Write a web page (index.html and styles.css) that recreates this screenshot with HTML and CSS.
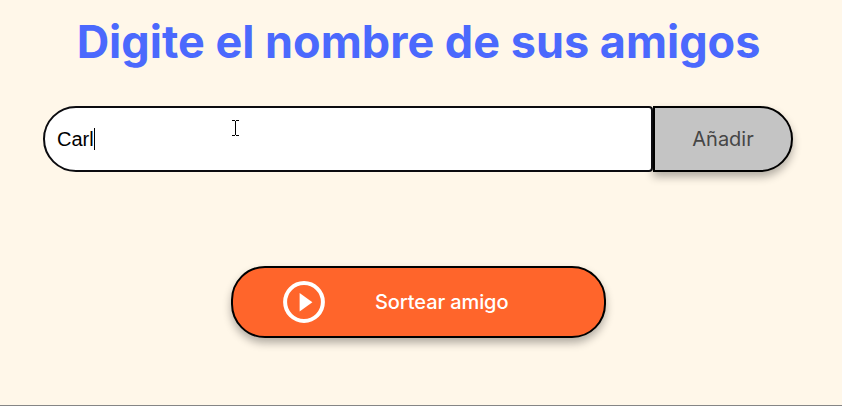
FILE: index.html
```
<!DOCTYPE html>
<html lang="es">
<head>
<meta charset="utf-8">
<title>Amigo secreto</title>
<link rel="stylesheet" href="styles.css">
</head>
<body>
<main class="panel">
  <h1 class="title">Digite el nombre de sus amigos</h1>
  <div class="entry">
    <div class="field" role="textbox"><span class="value">Carl</span><span class="caret"></span>
      <svg class="pointer" width="7" height="16" viewBox="0 0 7 16" shape-rendering="crispEdges"><path d="M0 0h3v1H0zM4 0h3v1H4zM3 1h1v14H3zM0 15h3v1H0zM4 15h3v1H4z"/></svg>
    </div>
    <button class="btn add">Añadir</button>
  </div>
  <button class="btn draw">
    <svg class="play" width="42" height="42" viewBox="0 0 42 42"><circle cx="21" cy="21" r="18.9" fill="none" stroke="#fff" stroke-width="4"/><path d="M16.6 12v18.4L29.4 21.2z" fill="#fff"/></svg>
    <span>Sortear amigo</span>
  </button>
</main>
</body>
</html>
```
FILE: styles.css
```
* { box-sizing: border-box; }
body { margin: 0; background: #fff7e9; font-family: Inter, sans-serif; }
.panel {
  height: 406px;
  padding-top: 14px;
  border-bottom: 1px solid #858585;
  display: flex;
  flex-direction: column;
  align-items: center;
}
.title {
  margin: 0 5px 37px 0;
  color: #4b69fd;
  font-size: 45px;
  line-height: 55px;
  font-weight: 700;
  white-space: nowrap;
}
.entry { display: flex; width: 750px; height: 66px; margin-right: 6px; }
.field {
  position: relative;
  z-index: 1;
  width: 610px;
  padding-left: 12px;
  display: flex;
  align-items: center;
  background: #fff;
  border: 2px solid #0c0c10;
  border-radius: 33px 4px 4px 33px;
  font: 20px "Liberation Sans", sans-serif;
  color: #000;
}
.caret { width: 1px; height: 22px; background: #000; }
.pointer { position: absolute; left: 187px; top: 12px; }
.btn {
  border: 2px solid #000;
  padding: 0;
  font: 20px Inter, sans-serif;
  box-shadow: 0 5px 8px rgba(0, 0, 0, .3);
}
.add {
  width: 140px;
  background: #c4c4c4;
  color: #464646;
  border-radius: 0 33px 33px 0;
}
.draw {
  width: 375px;
  height: 72px;
  margin: 94px 5px 0 0;
  padding-left: 50px;
  display: flex;
  align-items: center;
  gap: 50px;
  background: #ff652b;
  color: #fff;
  border-radius: 34px;
  font-weight: 500;
  letter-spacing: -.1px;
}
.play { flex: none; }
```
